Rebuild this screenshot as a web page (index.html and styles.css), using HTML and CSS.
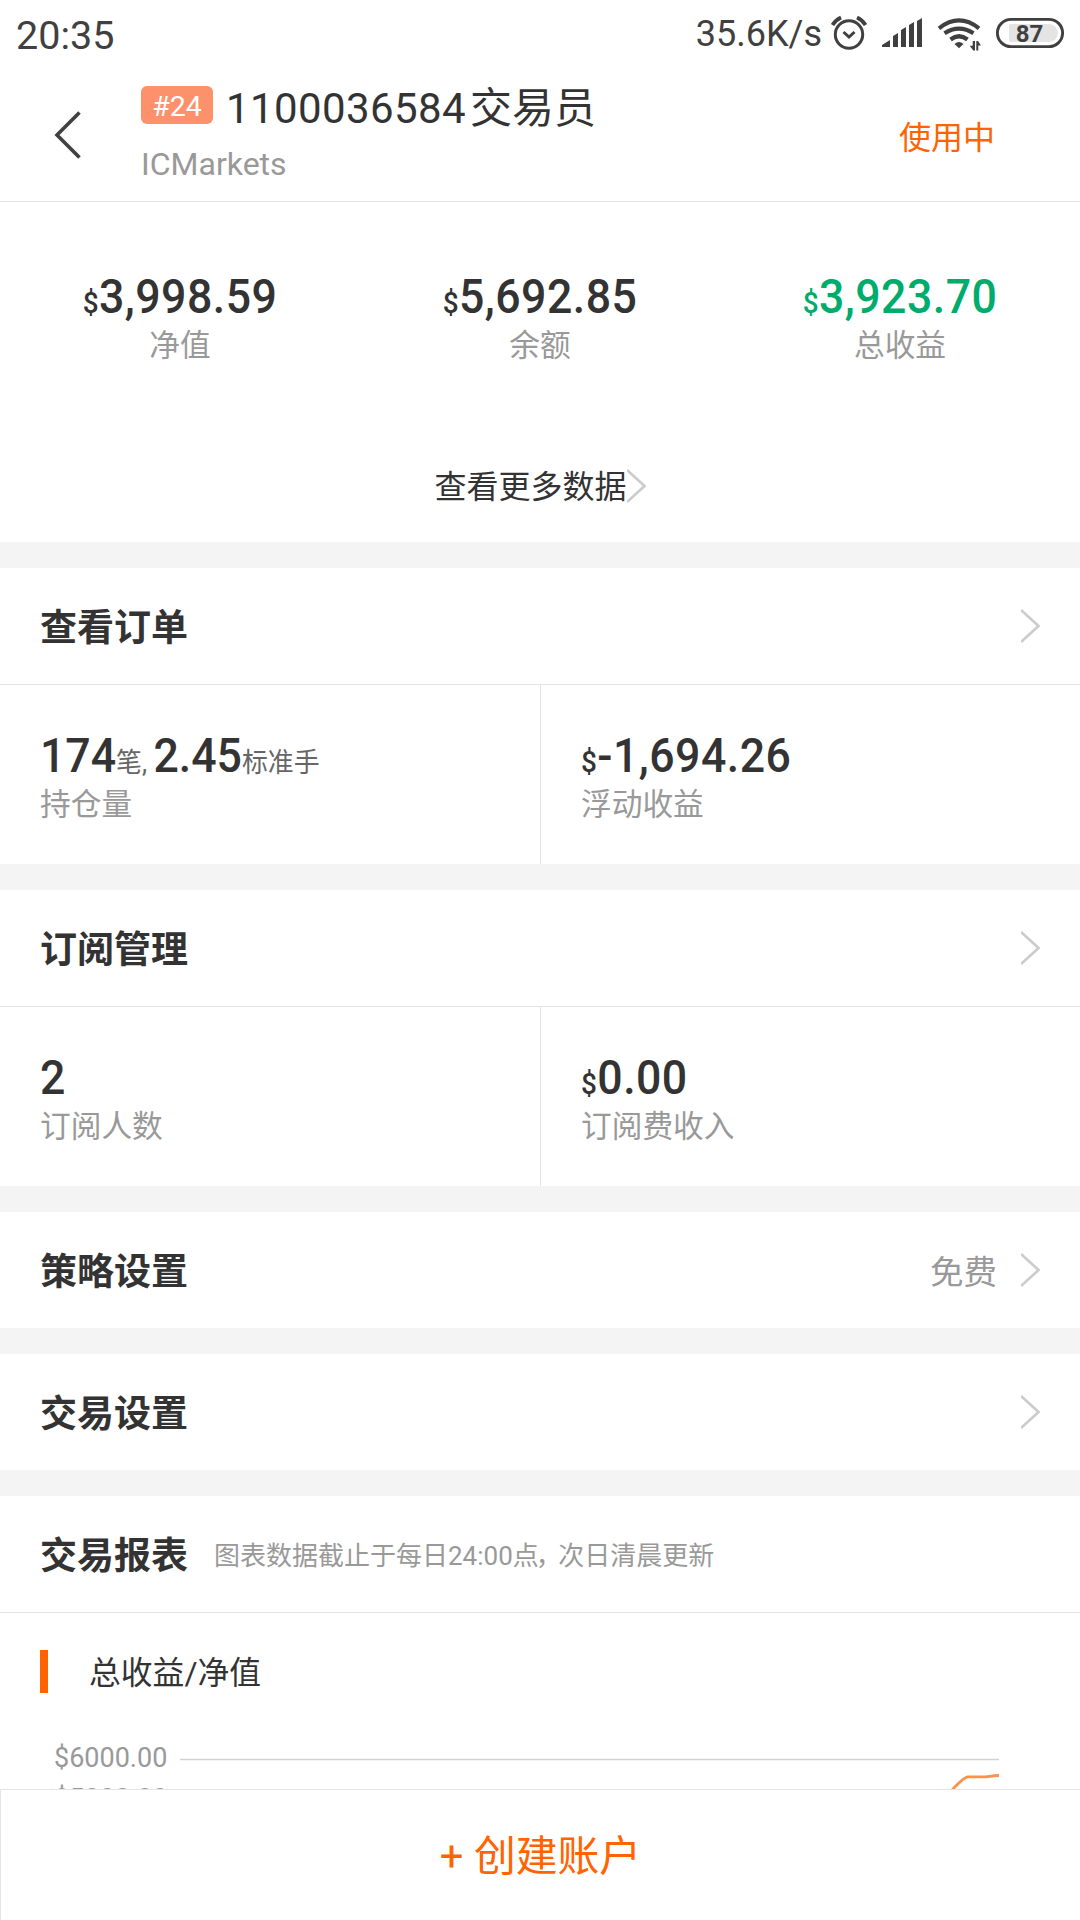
FILE: index.html
```html
<!DOCTYPE html>
<html lang="zh-CN">
<head>
  <meta charset="UTF-8">
  <title>交易员</title>
  <link rel="stylesheet" href="styles.css">
</head>
<body>
  <div class="status">
    <span class="clock">20:35</span>
    <div class="status-right">
      <span class="speed">35.6K/s</span>
      <svg class="status-icons" width="250" height="40" viewBox="0 0 250 40" fill="none" stroke="#404040">
        <!-- alarm -->
        <circle cx="27" cy="23.5" r="13.7" stroke-width="3"/>
        <path d="M21.500 21l5.500 5 5.500-5" stroke-width="3"/>
        <path d="M10.500 14q3-5 8.500-7.500M43.500 14q-3-5-8.500-7.500" stroke-width="3.800"/>
        <!-- signal -->
        <path d="M60 36v-2l8-5v7zM71 36v-11l5-3v14zM79 36v-17l5-3v20zM87 36v-22l5-3v25zM95 36v-26l5-3v29z" fill="#404040" stroke="none"/>
        <!-- wifi -->
        <path d="M117 17.300Q137 1.500 157 17.300M122.500 22.300Q137 13 151.500 22.300M128.500 28.500Q137 22 145.500 28.500" stroke-width="4.200"/>
        <path d="M132.500 33Q137 28.800 141.500 33L137 37.300z" fill="#404040" stroke="none"/>
        <path d="M153 30v9.500h-1.700L147.700 34.800h3V30zM154.300 39.500V30h1.700l3 4.500h-2.700v5z" fill="#404040" stroke="none"/>
        <!-- battery -->
        <rect x="175.400" y="8.400" width="65.200" height="27.200" rx="13.600" stroke-width="2.900"/>
        <path d="M189 13h38a9 9 0 0 1 0 18h-38q-2 0-2-2v-14q0-2 2-2z" fill="#e4e4e4" stroke="none"/>
        <text x="207.500" y="31" text-anchor="middle" class="battery-text">87</text>
      </svg>
    </div>
  </div>

  <header class="header">
    <svg class="back" width="28" height="48" viewBox="0 0 28 48" fill="none" stroke="#404040" stroke-width="3.600">
      <path d="M25.500 1.500L3 24 25.500 46.500"/>
    </svg>
    <div class="trader">
      <div class="trader-name">
        <span class="badge">#24</span>
        <h1><span class="account">1100036584</span>交易员</h1>
      </div>
      <div class="broker">ICMarkets</div>
    </div>
    <span class="in-use">使用中</span>
  </header>

  <main>
    <section class="summary">
      <div class="stats">
        <div class="stat">
          <div class="num"><small>$</small>3,998.59</div>
          <div class="label">净值</div>
        </div>
        <div class="stat">
          <div class="num"><small>$</small>5,692.85</div>
          <div class="label">余额</div>
        </div>
        <div class="stat">
          <div class="num green"><small>$</small>3,923.70</div>
          <div class="label">总收益</div>
        </div>
      </div>
      <div class="more">查看更多数据<svg class="arrow" viewBox="0 0 19 34"><path d="M0 1L17.500 17 0 33"/></svg></div>
    </section>

    <section>
      <div class="row">
        <h2>查看订单</h2>
        <svg class="arrow" viewBox="0 0 19 34"><path d="M0 1L17.500 17 0 33"/></svg>
      </div>
      <div class="cells">
        <div class="cell">
          <div class="num lots">174<span class="unit">笔, </span>2.45<span class="unit">标准手</span></div>
          <div class="label">持仓量</div>
        </div>
        <div class="cell">
          <div class="num"><small>$</small>-1,694.26</div>
          <div class="label">浮动收益</div>
        </div>
      </div>
    </section>

    <section>
      <div class="row">
        <h2>订阅管理</h2>
        <svg class="arrow" viewBox="0 0 19 34"><path d="M0 1L17.500 17 0 33"/></svg>
      </div>
      <div class="cells">
        <div class="cell">
          <div class="num">2</div>
          <div class="label">订阅人数</div>
        </div>
        <div class="cell">
          <div class="num"><small>$</small>0.00</div>
          <div class="label">订阅费收入</div>
        </div>
      </div>
    </section>

    <section>
      <div class="row">
        <h2>策略设置</h2>
        <span class="value">免费</span>
        <svg class="arrow" viewBox="0 0 19 34"><path d="M0 1L17.500 17 0 33"/></svg>
      </div>
    </section>

    <section>
      <div class="row">
        <h2>交易设置</h2>
        <svg class="arrow" viewBox="0 0 19 34"><path d="M0 1L17.500 17 0 33"/></svg>
      </div>
    </section>

    <section class="report">
      <div class="row">
        <h2>交易报表</h2>
        <span class="note">图表数据截止于每日24:00点<span class="comma">，</span>次日清晨更新</span>
      </div>
      <h3>总收益/净值</h3>
      <div class="chart">
        <div class="axis">
          <span>$6000.00</span>
          <span>$5000.00</span>
        </div>
        <svg class="plot" width="819" height="82" viewBox="0 0 819 82" fill="none">
          <path d="M0 14.500H819" stroke="#d2d2d2" stroke-width="1.300"/>
          <path d="M768 50L773 44C778 39 784 31.800 788 31.800H798C808 32.500 808 31 819 30.500" stroke="#fa924a" stroke-width="2.800"/>
        </svg>
      </div>
    </section>
  </main>

  <footer class="create">+ 创建账户</footer>
</body>
</html>
```

FILE: styles.css
```css
* {
  box-sizing: border-box;
}
body {
  margin: 0;
  height: 1920px;
  display: flex;
  flex-direction: column;
  overflow: hidden;
  background: #fff;
  color: #333;
  font-family: Roboto, "Noto Sans CJK SC", sans-serif;
}
h1, h2, h3 {
  margin: 0;
  font-weight: 400;
}
svg {
  display: block;
  flex: none;
}

.status {
  height: 68px;
  flex: none;
  display: flex;
  justify-content: space-between;
  padding: 11px 8px 0 16px;
  color: #404040;
}
.clock {
  font-size: 39.5px;
  line-height: 50px;
}
.status-right {
  display: flex;
}
.speed {
  font-size: 36px;
  line-height: 47px;
}
.battery-text {
  fill: #404040;
  stroke: none;
  font-size: 24px;
  font-weight: 700;
}

.header {
  height: 134px;
  flex: none;
  display: flex;
  align-items: flex-start;
  border-bottom: 1px solid #e5e5e5;
}
.back {
  margin: 43px 0 0 54px;
}
.trader {
  flex: 1;
  padding: 14px 0 0 59px;
}
.trader-name {
  display: flex;
}
.badge {
  width: 72px;
  height: 38px;
  margin-top: 4px;
  border-radius: 6px;
  background: #fc916c;
  color: #fff;
  font-size: 28.5px;
  line-height: 42px;
  text-align: center;
}
h1 {
  height: 50px;
  margin-left: 13px;
  font-size: 42px;
  line-height: 53px;
}
.account {
  margin-right: 4px;
  letter-spacing: 0.4px;
}
.broker {
  margin-top: 13px;
  color: #999;
  font-size: 32px;
  line-height: 38px;
}
.in-use {
  margin: 46px 85px 0 0;
  color: #ff6400;
  font-size: 32px;
  line-height: 48px;
}

main {
  flex: 1;
  min-height: 0;
  overflow: hidden;
}
section + section {
  border-top: 26px solid #f4f4f4;
}
.summary {
  height: 340px;
  padding-top: 67px;
}
.stats {
  display: grid;
  grid-template-columns: repeat(3, 1fr);
  text-align: center;
}
.num {
  height: 56px;
  font-size: 48px;
  font-weight: 500;
  line-height: 56px;
  letter-spacing: 0.5px;
  white-space: nowrap;
  transform: scaleX(0.93);
}
.num small {
  font-size: 30px;
  line-height: 1;
}
.lots {
  letter-spacing: 0;
}
.green {
  color: #00ac6c;
}
.label {
  margin-top: 1px;
  color: #999;
  font-size: 30.7px;
  line-height: 40px;
}
.more {
  display: flex;
  justify-content: center;
  align-items: center;
  margin-top: 97px;
  font-size: 32px;
  line-height: 48px;
}
.arrow {
  width: 19px;
  height: 34px;
  fill: none;
  stroke: #ccc;
  stroke-width: 2.6;
}
.more .arrow {
  margin-bottom: 2px;
}

.row {
  height: 116px;
  display: flex;
  align-items: center;
  padding: 0 40px;
}
h2 {
  padding-top: 5px;
  font-size: 37px;
  font-weight: 700;
  line-height: 54px;
}
.row .arrow {
  margin-left: auto;
}
.value {
  margin: -2px 0 0 auto;
  color: #999;
  font-size: 33.5px;
}
.value + .arrow {
  margin-left: 24px;
}
.cells {
  height: 180px;
  display: grid;
  grid-template-columns: 1fr 1fr;
  border-top: 1px solid #e4e4e8;
}
.cell {
  padding: 43px 0 0 40px;
}
.cell + .cell {
  border-left: 1px solid #e4e4e8;
}
.cell .num {
  transform-origin: left;
}
.unit {
  color: #666;
  font-size: 27.8px;
  font-weight: 400;
  line-height: 1;
}

.report .row {
  height: 117px;
  border-bottom: 1px solid #e4e4e8;
}
.note {
  margin: -2px 0 0 26px;
  color: #999;
  font-size: 26px;
}
.comma {
  margin-left: -3px;
  letter-spacing: -3.5px;
}
h3 {
  height: 43px;
  margin: 37px 0 0 40px;
  padding-left: 41px;
  border-left: 8px solid #ff6400;
  font-size: 31.8px;
  line-height: 47px;
}
.chart {
  display: flex;
  margin-top: 52px;
  padding-left: 54px;
}
.axis {
  width: 126px;
  display: flex;
  flex-direction: column;
  color: #999;
  font-size: 27px;
  line-height: 41px;
  margin-top: -7px;
}

.create {
  height: 131px;
  flex: none;
  border-top: 1px solid #e4e4e4;
  border-left: 1px solid #e4e4e4;
  color: #ff6400;
  font-size: 41.8px;
  line-height: 134px;
  text-align: center;
}
```
